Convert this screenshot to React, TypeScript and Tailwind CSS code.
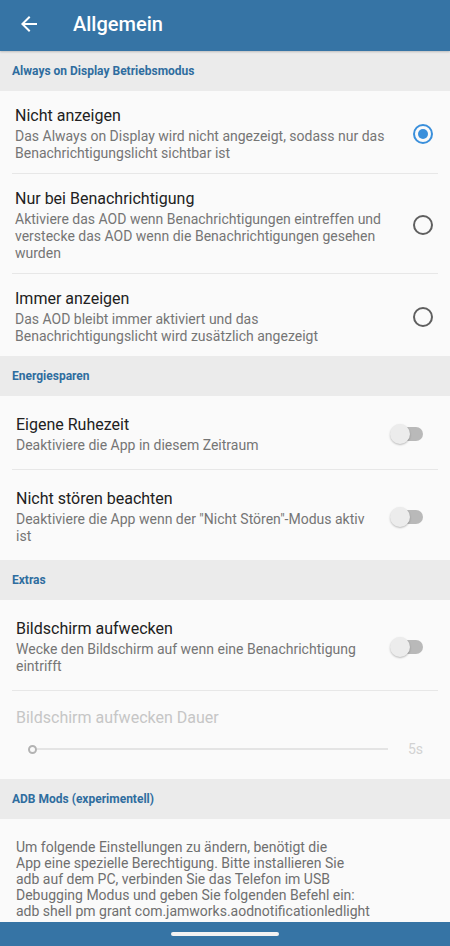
import { useState } from 'react';

type Mode = 'none' | 'notify' | 'always';

const modes: { id: Mode; title: string; lines: string[] }[] = [
  {
    id: 'none',
    title: 'Nicht anzeigen',
    lines: ['Das Always on Display wird nicht angezeigt, sodass nur das', 'Benachrichtigungslicht sichtbar ist'],
  },
  {
    id: 'notify',
    title: 'Nur bei Benachrichtigung',
    lines: [
      'Aktiviere das AOD wenn Benachrichtigungen eintreffen und',
      'verstecke das AOD wenn die Benachrichtigungen gesehen',
      'wurden',
    ],
  },
  {
    id: 'always',
    title: 'Immer anzeigen',
    lines: ['Das AOD bleibt immer aktiviert und das', 'Benachrichtigungslicht wird zusätzlich angezeigt'],
  },
];

function SectionHeader({ label }: { label: string }) {
  return (
    <div className="h-[40px] flex items-center px-[12px] bg-[#ebebeb]">
      <span className="text-[12px] font-bold text-[#2f6d9f] leading-none">{label}</span>
    </div>
  );
}

function Divider() {
  return <div className="mx-[12px] h-px bg-[#e7e7e7]" />;
}

function Radio({ checked }: { checked: boolean }) {
  return checked ? (
    <div className="w-[20px] h-[20px] rounded-full border-2 border-[#3a8fdb] flex items-center justify-center">
      <div className="w-[10px] h-[10px] rounded-full bg-[#3a8fdb]" />
    </div>
  ) : (
    <div className="w-[20px] h-[20px] rounded-full border-2 border-[#5f5f5f]" />
  );
}

function Toggle({ on }: { on: boolean }) {
  return (
    <div className={`relative w-[32px] h-[14px] rounded-full ${on ? 'bg-[#9cc5ec]' : 'bg-[#b9b9b9]'}`}>
      <div
        className={`absolute top-[-3px] w-[20px] h-[20px] rounded-full shadow-[0_1px_2px_rgba(0,0,0,0.25)] ${
          on ? 'left-[13px] bg-[#3a8fdb]' : 'left-[-1px] bg-[#ececec]'
        }`}
      />
    </div>
  );
}

function SwitchItem({ title, lines, on, onClick }: { title: string; lines: string[]; on: boolean; onClick: () => void }) {
  return (
    <div onClick={onClick} className="flex items-center pl-[16px] pr-[27px] pt-[18px] pb-[15px] cursor-pointer">
      <div className="flex-1 min-w-0">
        <div className="text-[16px] leading-[21px] text-[#212121]">{title}</div>
        <div className="mt-[2px] text-[14px] leading-[17px] text-[#757575] whitespace-nowrap">
          {lines.map((l, i) => (
            <div key={i}>{l}</div>
          ))}
        </div>
      </div>
      <Toggle on={on} />
    </div>
  );
}

export default function App() {
  const [mode, setMode] = useState<Mode>('none');
  const [quiet, setQuiet] = useState(false);
  const [dnd, setDnd] = useState(false);
  const [wake, setWake] = useState(false);

  return (
    <div className="w-[450px] h-[946px] flex flex-col overflow-hidden bg-[#fafafa] font-['Roboto',sans-serif]">
      {/* Toolbar */}
      <div className="h-[51px] shrink-0 flex items-center bg-[#3674a5] shadow-[0_1px_2px_rgba(0,0,0,0.2)] z-10">
        <div className="w-[72px] pl-[16px] flex items-center">
          <svg width="24" height="24" viewBox="0 0 24 24" className="mt-[-3px] ml-[1px]">
            <path fill="#fff" d="M20 11H7.83l5.59-5.59L12 4l-8 8 8 8 1.41-1.41L7.83 13H20v-2z" />
          </svg>
        </div>
        <h1 className="text-[20px] font-medium text-white mt-[-4px] ml-[1px]">Allgemein</h1>
      </div>

      <div className="flex-1 overflow-hidden">
        <SectionHeader label="Always on Display Betriebsmodus" />
        {modes.map((m, i) => (
          <div key={m.id}>
            <div
              onClick={() => setMode(m.id)}
              className="flex items-center pl-[15px] pr-[17px] pt-[14px] pb-[11px] cursor-pointer"
            >
              <div className="flex-1 min-w-0">
                <div className="text-[16px] leading-[21px] text-[#212121]">{m.title}</div>
                <div className="mt-[2px] text-[14px] leading-[17px] text-[#757575] whitespace-nowrap">
                  {m.lines.map((l, j) => (
                    <div key={j}>{l}</div>
                  ))}
                </div>
              </div>
              <Radio checked={mode === m.id} />
            </div>
            {i < modes.length - 1 && <Divider />}
          </div>
        ))}

        <SectionHeader label="Energiesparen" />
        <SwitchItem
          title="Eigene Ruhezeit"
          lines={['Deaktiviere die App in diesem Zeitraum']}
          on={quiet}
          onClick={() => setQuiet(!quiet)}
        />
        <Divider />
        <SwitchItem
          title="Nicht stören beachten"
          lines={['Deaktiviere die App wenn der "Nicht Stören"-Modus aktiv', 'ist']}
          on={dnd}
          onClick={() => setDnd(!dnd)}
        />

        <SectionHeader label="Extras" />
        <SwitchItem
          title="Bildschirm aufwecken"
          lines={['Wecke den Bildschirm auf wenn eine Benachrichtigung', 'eintrifft']}
          on={wake}
          onClick={() => setWake(!wake)}
        />
        <Divider />
        <div className="pl-[16px] pr-[27px] pt-[16px] pb-[18px]">
          <div className="text-[16px] leading-[21px] text-[#c6c6c6]">Bildschirm aufwecken Dauer</div>
          <div className="mt-[9px] h-[24px] flex items-center">
            <div className="ml-[12px] w-[9px] h-[9px] rounded-full border-2 border-[#b3b3b3] shrink-0" />
            <div className="flex-1 h-[2px] bg-[#e4e4e4]" />
            <span className="ml-[20px] text-[14px] text-[#d2d2d2]">5s</span>
          </div>
        </div>

        <SectionHeader label="ADB Mods (experimentell)" />
        <div className="px-[16px] pt-[20px] text-[14px] leading-[16px] text-[#6f6f6f] whitespace-nowrap">
          Um folgende Einstellungen zu ändern, benötigt die
          <br />
          App eine spezielle Berechtigung. Bitte installieren Sie
          <br />
          adb auf dem PC, verbinden Sie das Telefon im USB
          <br />
          Debugging Modus und geben Sie folgenden Befehl ein:
          <br />
          adb shell pm grant com.jamworks.aodnotificationledlight
        </div>
      </div>

      {/* Navigation bar */}
      <div className="h-[24px] shrink-0 bg-[#3674a5] flex items-center justify-center">
        <div className="w-[108px] h-[4px] rounded-full bg-[#f2f2f2]" />
      </div>
    </div>
  );
}
